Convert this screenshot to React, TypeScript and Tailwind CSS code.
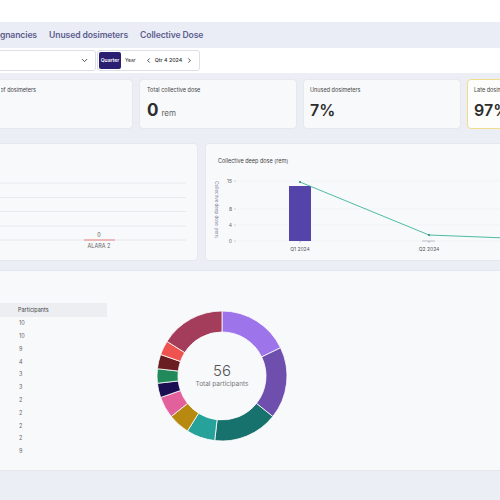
import React from "react";

const segs = [
  { v: 10, c: "#9d74ea" },
  { v: 10, c: "#6e4fae" },
  { v: 9, c: "#17726d" },
  { v: 4, c: "#27a29a" },
  { v: 3, c: "#b8890f" },
  { v: 3, c: "#e2609b" },
  { v: 2, c: "#1b0e52" },
  { v: 2, c: "#208a5b" },
  { v: 2, c: "#6a1e22" },
  { v: 2, c: "#ef5350" },
  { v: 9, c: "#a33d5b" },
];

function arcPath(cx: number, cy: number, r0: number, r1: number, a0: number, a1: number) {
  const p = (r: number, a: number) => {
    const rad = (a * Math.PI) / 180;
    return [cx + r * Math.sin(rad), cy - r * Math.cos(rad)];
  };
  const [x0, y0] = p(r1, a0);
  const [x1, y1] = p(r1, a1);
  const [x2, y2] = p(r0, a1);
  const [x3, y3] = p(r0, a0);
  const large = a1 - a0 > 180 ? 1 : 0;
  return `M${x0} ${y0} A${r1} ${r1} 0 ${large} 1 ${x1} ${y1} L${x2} ${y2} A${r0} ${r0} 0 ${large} 0 ${x3} ${y3} Z`;
}

function Donut() {
  const total = segs.reduce((s, x) => s + x.v, 0);
  let acc = 0;
  return (
    <svg width="140" height="140" viewBox="0 0 140 140">
      {segs.map((s, i) => {
        const a0 = (acc / total) * 360;
        acc += s.v;
        const a1 = (acc / total) * 360;
        return <path key={i} d={arcPath(70, 70, 44, 65, a0, a1)} fill={s.c} stroke="#ffffff" strokeWidth="0.8" />;
      })}
    </svg>
  );
}

const participants = ["10", "10", "9", "4", "3", "3", "2", "2", "2", "2", "9"];

export default function App() {
  return (
    <div
      className="w-[500px] h-[500px] overflow-hidden bg-[#ebeef5] flex flex-col"
      style={{ fontFamily: "Inter, 'Liberation Sans', sans-serif" }}
    >
      {/* top white */}
      <div className="h-[22px] bg-white shrink-0" />
      {/* tabs */}
      <div className="h-[26px] bg-[#eaedf6] flex items-center shrink-0 text-[8.6px] font-semibold tracking-[-0.1px] text-[#5d5d8e] whitespace-nowrap">
        <div className="w-[37px] overflow-hidden flex justify-end">
          <span>Pregnancies</span>
        </div>
        <span className="ml-[12px]">Unused dosimeters</span>
        <span className="ml-[12px]">Collective Dose</span>
      </div>
      {/* controls */}
      <div className="h-[25px] bg-white flex items-center shrink-0">
        <div className="ml-[-10px] w-[106px] h-[21px] border border-[#dcdfe6] rounded-[3px] bg-white flex items-center justify-end pr-[6px]">
          <svg width="9" height="9" viewBox="0 0 24 24" fill="none" stroke="#444" strokeWidth="2.5" strokeLinecap="round" strokeLinejoin="round">
            <path d="M6 9l6 6 6-6" />
          </svg>
        </div>
        <div className="ml-[1px] w-[103px] h-[21px] border border-[#dcdfe6] rounded-[3px] bg-white flex items-center p-[1px] text-[5px] text-[#333] whitespace-nowrap">
          <div className="h-full w-[22px] bg-[#291e70] rounded-[2px] flex items-center justify-center text-white font-semibold">Quarter</div>
          <span className="ml-[4px]">Year</span>
          <svg className="ml-[9px] shrink-0" width="7" height="7" viewBox="0 0 24 24" fill="none" stroke="#333" strokeWidth="3" strokeLinecap="round" strokeLinejoin="round">
            <path d="M15 6l-6 6 6 6" />
          </svg>
          <span className="ml-[3px] text-[5.3px] font-medium">Qtr 4 2024</span>
          <svg className="ml-[4px] shrink-0" width="7" height="7" viewBox="0 0 24 24" fill="none" stroke="#333" strokeWidth="3" strokeLinecap="round" strokeLinejoin="round">
            <path d="M9 6l6 6-6 6" />
          </svg>
        </div>
      </div>
      {/* KPI cards */}
      <div className="flex gap-[6px] ml-[-10px] mt-[6px] shrink-0 h-[50px] whitespace-nowrap">
        <div className="w-[143px] shrink-0 bg-[#f8f9fb] border border-[#e5e8ee] rounded-[4px] pt-[6px] pl-[10px]">
          <div className="w-[35px] overflow-hidden flex justify-end text-[5.5px] text-[#444]">
            <span>Number of dosimeters</span>
          </div>
        </div>
        <div className="w-[158px] shrink-0 bg-[#f8f9fb] border border-[#e5e8ee] rounded-[4px] pt-[6px] pl-[7px]">
          <div className="text-[5.5px] text-[#444]">Total collective dose</div>
          <div className="mt-[8px] flex items-baseline gap-[3px]">
            <span className="text-[17px] font-bold text-[#2d2d2d] leading-none">0</span>
            <span className="text-[8px] text-[#666]">rem</span>
          </div>
        </div>
        <div className="w-[158px] shrink-0 bg-[#f8f9fb] border border-[#e5e8ee] rounded-[4px] pt-[6px] pl-[6px]">
          <div className="text-[5.5px] text-[#444]">Unused dosimeters</div>
          <div className="mt-[8px] text-[16px] font-semibold text-[#2d2d2d] leading-none">7%</div>
        </div>
        <div className="w-[100px] shrink-0 bg-[#fdfdfb] border border-[#f0de8a] rounded-[4px] pt-[6px] pl-[6px]">
          <div className="text-[5.5px] text-[#444]">Late dosimeters</div>
          <div className="mt-[8px] text-[16px] font-semibold text-[#2d2d2d] leading-none">97%</div>
        </div>
      </div>
      {/* charts row */}
      <div className="flex gap-[7px] ml-[-10px] mt-[14px] shrink-0 h-[118px]">
        <div className="w-[208px] shrink-0 bg-[#f8f9fb] border border-[#e5e8ee] rounded-[4px] overflow-hidden">
          <svg width="208" height="118" viewBox="0 0 208 118">
            {[39, 53.5, 67.5, 82, 96].map((y) => (
              <line key={y} x1="0" x2="195" y1={y} y2={y} stroke="#e3e5ea" strokeWidth="0.8" />
            ))}
            <line x1="93" x2="124" y1="96" y2="96" stroke="#e57373" strokeWidth="0.9" />
            <text x="108" y="93" fontSize="5.5" fill="#555" textAnchor="middle">0</text>
            <text x="108" y="104" fontSize="5.5" fill="#666" textAnchor="middle">ALARA 2</text>
          </svg>
        </div>
        <div className="w-[300px] shrink-0 bg-[#f8f9fb] border border-[#e5e8ee] rounded-[4px] overflow-hidden pt-[13px] pl-[12px]">
          <div className="text-[5.5px] text-[#444] whitespace-nowrap">Collective deep dose (rem)</div>
          <svg className="ml-[-12px] mt-[5px]" width="300" height="92" viewBox="0 0 300 92">
            <text transform="translate(9 40) rotate(90)" fontSize="4.5" fill="#8a8aa8" textAnchor="middle">Collective deep dose (rem)</text>
            {[
              { y: 11, l: "15" },
              { y: 39, l: "8" },
              { y: 55, l: "4" },
              { y: 71, l: "0" },
            ].map((t) => (
              <g key={t.l}>
                <text x="26" y={t.y + 1.8} fontSize="5" fill="#666" textAnchor="end">{t.l}</text>
                <line x1="28" x2="30" y1={t.y} y2={t.y} stroke="#aaa" strokeWidth="0.5" />
                <line x1="31" x2="300" y1={t.y} y2={t.y} stroke="#eceef2" strokeWidth="0.6" />
              </g>
            ))}
            <rect x="83" y="16" width="22" height="55" fill="#5443a8" />
            <line x1="216" x2="229" y1="71" y2="71" stroke="#b0b0c0" strokeWidth="0.8" />
            <polyline points="94,12 223,65 300,68" fill="none" stroke="#3bb39a" strokeWidth="0.9" />
            <circle cx="94" cy="12" r="1.1" fill="#2a8f7a" />
            <circle cx="223" cy="65" r="1.1" fill="#2a8f7a" />
            <line x1="94" x2="94" y1="71" y2="73" stroke="#888" strokeWidth="0.5" />
            <line x1="223" x2="223" y1="71" y2="73" stroke="#888" strokeWidth="0.5" />
            <text x="94" y="81" fontSize="5" fill="#555" textAnchor="middle">Q1 2024</text>
            <text x="223" y="81" fontSize="5" fill="#555" textAnchor="middle">Q2 2024</text>
          </svg>
        </div>
      </div>
      {/* bottom card */}
      <div className="mt-[9px] h-[201px] shrink-0 bg-[#f8f9fb] border-t border-[#dfe6f0] border-b border-b-[#e3e6ec] flex">
        <div className="w-[107px] mt-[32px]">
          <div className="h-[14px] bg-[#eceef2] flex items-center pl-[18px] text-[5.5px] text-[#444]">Participants</div>
          {participants.map((p, i) => (
            <div key={i} className="h-[12.8px] flex items-center pl-[19px] text-[5.5px] text-[#666]">{p}</div>
          ))}
        </div>
        <div className="ml-[45px] mt-[35px] relative w-[140px] h-[140px]">
          <Donut />
          <div className="absolute inset-0 flex flex-col items-center justify-center">
            <div className="text-[15px] font-light text-[#555] leading-none">56</div>
            <div className="text-[6.5px] text-[#777] mt-[2px]">Total participants</div>
          </div>
        </div>
      </div>
    </div>
  );
}
